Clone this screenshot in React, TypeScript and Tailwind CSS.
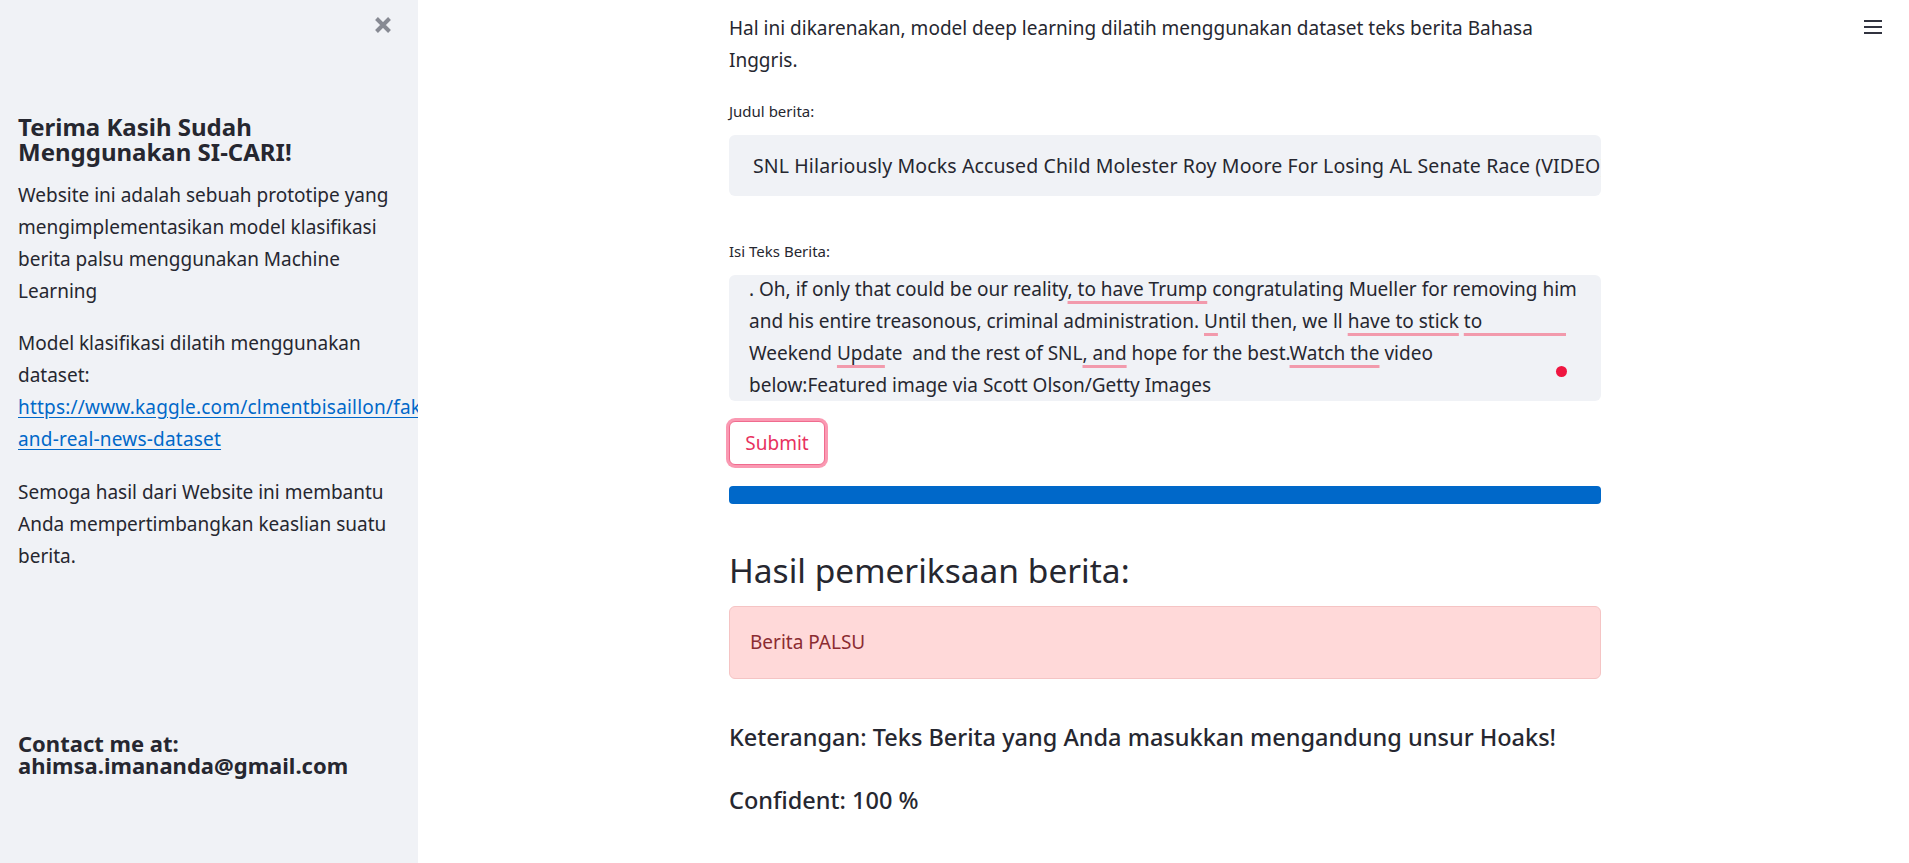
import React from "react";

const font = { fontFamily: '"Noto Sans", "Open Sans", sans-serif' };

function U({ children }: { children: React.ReactNode }) {
  return (
    <span className="underline decoration-[#f29aac] decoration-[3px] underline-offset-[5px] [text-decoration-skip-ink:none]">
      {children}
    </span>
  );
}

function XIcon() {
  return (
    <svg width="18" height="18" viewBox="0 0 18 18">
      <path d="M2.5 2.5 L15.5 15.5 M15.5 2.5 L2.5 15.5" stroke="#878a93" strokeWidth="4" strokeLinecap="butt" />
    </svg>
  );
}

function Hamburger() {
  return (
    <svg width="18" height="16" viewBox="0 0 18 16">
      <rect x="0" y="1" width="18" height="2" fill="#31333f" />
      <rect x="0" y="7" width="18" height="2" fill="#31333f" />
      <rect x="0" y="13" width="18" height="2" fill="#31333f" />
    </svg>
  );
}

export default function App() {
  return (
    <div className="flex h-[863px] w-full overflow-hidden bg-white text-[#262730]" style={font}>
      {/* Sidebar */}
      <aside className="w-[418px] shrink-0 overflow-hidden bg-[#f0f2f6] flex flex-col">
        <div className="flex justify-end pr-[26px] pt-[16px] h-[40px]">
          <XIcon />
        </div>
        <div className="pl-[18px] pt-[74px]">
          <h3 className="text-[24px] leading-[25px] font-bold">
            Terima Kasih Sudah
            <br />
            Menggunakan SI-CARI!
          </h3>
          <p className="mt-[15px] text-[19px] leading-[32px] w-[390px]">
            Website ini adalah sebuah prototipe yang
            <br />
            mengimplementasikan model klasifikasi
            <br />
            berita palsu menggunakan Machine
            <br />
            Learning
          </p>
          <p className="mt-[20px] text-[19px] leading-[32px] whitespace-nowrap">
            Model klasifikasi dilatih menggunakan
            <br />
            dataset:
            <br />
            <a className="text-[#0068c9] underline underline-offset-[3px] tracking-[0.2px]" href="#">
              https://www.kaggle.com/clmentbisaillon/fake-
              <br />
              and-real-news-dataset
            </a>
          </p>
          <p className="mt-[21px] text-[19px] leading-[32px]">
            Semoga hasil dari Website ini membantu
            <br />
            Anda mempertimbangkan keaslian suatu
            <br />
            berita.
          </p>
          <h3 className="mt-[160px] text-[22px] leading-[22px] font-bold">
            Contact me at:
            <br />
            ahimsa.imananda@gmail.com
          </h3>
        </div>
      </aside>

      {/* Main */}
      <main className="relative flex-1 pl-[311px]">
        <div className="absolute right-[27px] top-[19px]">
          <Hamburger />
        </div>
        <div className="w-[872px] pt-[12px] flex flex-col">
          <p className="text-[19px] leading-[32px] whitespace-nowrap">
            Hal ini dikarenakan, model deep learning dilatih menggunakan dataset teks berita Bahasa
            <br />
            Inggris.
          </p>

          <label className="mt-[25px] text-[15px] leading-[20px]">Judul berita:</label>
          <div className="mt-[14px] h-[61px] rounded-[6px] bg-[#f0f2f6] flex items-center pl-[24px] pr-[4px] overflow-hidden">
            <span className="text-[19.5px] tracking-[0.12px] whitespace-nowrap">
              SNL Hilariously Mocks Accused Child Molester Roy Moore For Losing AL Senate Race (VIDEO)
            </span>
          </div>

          <label className="mt-[45px] text-[15px] leading-[20px]">Isi Teks Berita:</label>
          <div className="relative mt-[14px] h-[126px] rounded-[6px] bg-[#f0f2f6] overflow-hidden pl-[20px]">
            <div className="-mt-[2px] text-[19px] leading-[32px] whitespace-nowrap">
              <div>
                . Oh, if only that could be our reality<U>, to have Trump</U> congratulating Mueller for removing him
              </div>
              <div>
                and his entire treasonous, criminal administration. <U>U</U>ntil then, we ll <U>have to stick</U>{" "}
                <U>to</U>
                <span className="inline-block w-[84px] h-[3px] bg-[#f29aac] align-[-8px]" />
              </div>
              <div>
                Weekend <U>Upda</U>te&nbsp; and the rest of SNL<U>, and</U> hope for the best.<U>Watch the</U> video
              </div>
              <div>below:Featured image via Scott Olson/Getty Images</div>
            </div>
            <span className="absolute left-[827px] top-[91px] h-[11px] w-[11px] rounded-full bg-[#ef1640]" />
          </div>

          <div className="mt-[20px]">
            <button className="h-[44px] w-[96px] rounded-[6px] border border-[#f06b8e] bg-white text-[19px] text-[#e8325f] shadow-[0_0_0_3px_rgba(246,51,102,0.5)]">
              Submit
            </button>
          </div>

          <div className="mt-[21px] h-[18px] w-full rounded-[4px] bg-[#0068c9]" />

          <h2 className="mt-[44px] text-[33.5px] leading-[44px] font-normal">Hasil pemeriksaan berita:</h2>

          <div className="mt-[14px] h-[73px] rounded-[6px] border border-[#f5c4c4] bg-[#ffd9d9] flex items-center pl-[20px]">
            <span className="text-[19px] text-[#8b2c31]">Berita PALSU</span>
          </div>

          <p className="mt-[42px] text-[23.5px] leading-[32px] font-medium whitespace-nowrap">
            Keterangan: Teks Berita yang Anda masukkan mengandung unsur Hoaks!
          </p>
          <p className="mt-[31px] text-[23.5px] leading-[32px] font-medium">Confident: 100 %</p>
        </div>
      </main>
    </div>
  );
}
